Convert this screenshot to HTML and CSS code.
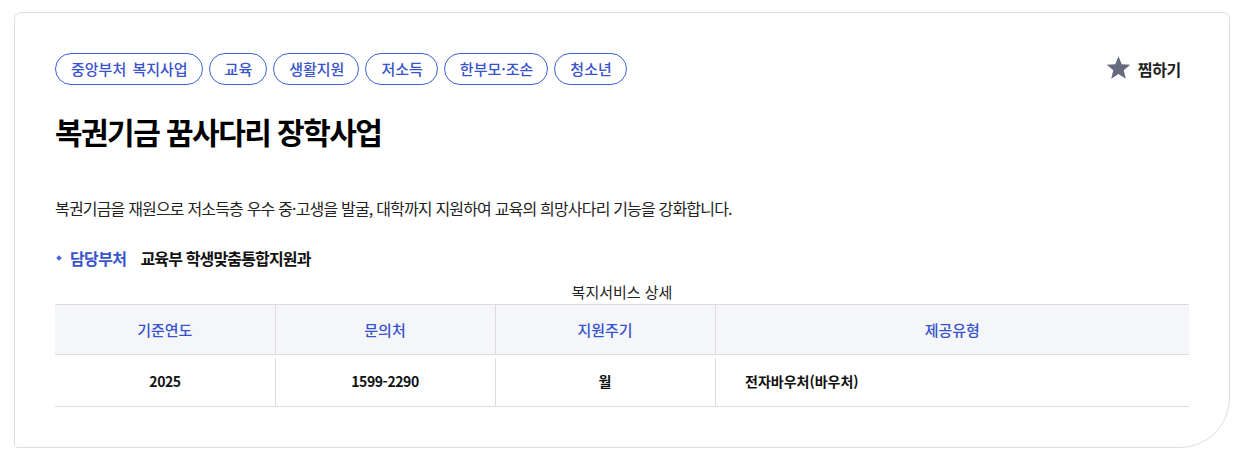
FILE: index.html
```html
<!DOCTYPE html>
<html lang="ko">
<head>
<meta charset="utf-8">
<title>복권기금 꿈사다리 장학사업</title>
<link rel="stylesheet" href="styles.css">
</head>
<body>
<article class="card">
  <div class="top">
    <ul class="tags">
      <li class="tag tag-wide">중앙부처 복지사업</li>
      <li class="tag">교육</li>
      <li class="tag">생활지원</li>
      <li class="tag">저소득</li>
      <li class="tag">한부모·조손</li>
      <li class="tag">청소년</li>
    </ul>
    <button class="fav" type="button">
      <svg class="star" width="25" height="25" viewBox="0 0 24 24" aria-hidden="true">
        <path d="M12 1.2l3.1 7.6 8.2.6-6.3 5.3 2 8-7-4.4-7 4.4 2-8L.7 9.4l8.2-.6z" fill="#676a7e"/>
      </svg>
      <span>찜하기</span>
    </button>
  </div>
  <h1 class="title">복권기금 꿈사다리 장학사업</h1>
  <p class="desc">복권기금을 재원으로 저소득층 우수 중·고생을 발굴, 대학까지 지원하여 교육의 희망사다리 기능을 강화합니다.</p>
  <dl class="dept">
    <dt>담당부처</dt>
    <dd>교육부 학생맞춤통합지원과</dd>
  </dl>
  <table class="detail">
    <caption>복지서비스 상세</caption>
    <colgroup>
      <col class="c1"><col class="c2"><col class="c3"><col class="c4">
    </colgroup>
    <thead>
      <tr><th>기준연도</th><th>문의처</th><th>지원주기</th><th>제공유형</th></tr>
    </thead>
    <tbody>
      <tr><td class="num">2025</td><td class="num">1599-2290</td><td>월</td><td class="left">전자바우처(바우처)</td></tr>
    </tbody>
  </table>
</article>
</body>
</html>
```
FILE: styles.css
```css
* { box-sizing: border-box; }
html, body { margin: 0; padding: 0; background: #fff; }
body {
  font-family: "Noto Sans CJK KR", "Noto Sans", sans-serif;
  color: #111;
}
.card {
  width: 1216px;
  height: 436px;
  margin: 12px 0 0 14px;
  padding: 40px 40px 40px 40px;
  border: 1px solid #dedede;
  border-radius: 7px 7px 50px 4px;
  background: #fff;
}
.top {
  display: flex;
  justify-content: space-between;
  align-items: center;
  height: 32px;
}
.tags {
  display: flex;
  gap: 6px;
  list-style: none;
  margin: 0;
  padding: 0;
}
.tag {
  height: 32px;
  padding: 0 14px 0 15px;
  border: 1px solid #3f5fd8;
  border-radius: 16px;
  color: #3853cc;
  font-size: 15px;
  font-weight: 500;
  line-height: 30px;
  white-space: nowrap;
}
.tag-wide { word-spacing: 2px; }
.fav {
  display: flex;
  align-items: center;
  gap: 7px;
  margin: 0 8px 0 0;
  padding: 0;
  border: 0;
  background: none;
  font-family: inherit;
  font-size: 16px;
  font-weight: 700;
  color: #222;
  letter-spacing: -0.3px;
  cursor: pointer;
}
.star { display: block; margin-top: -3px; }
.title {
  margin: 26px 0 0;
  font-size: 30px;
  line-height: 40px;
  font-weight: 700;
  letter-spacing: -1.55px;
  color: #000;
}
.desc {
  margin: 45px 0 0;
  font-size: 16px;
  line-height: 24px;
  letter-spacing: -0.82px;
  color: #222;
}
.dept {
  display: flex;
  align-items: center;
  margin: 26px 0 0;
  height: 24px;
  font-size: 16px;
  line-height: 24px;
  letter-spacing: -0.6px;
}
.dept dt {
  display: flex;
  align-items: center;
  gap: 9px;
  color: #3853cc;
  font-weight: 700;
}
.dept dt::before {
  content: "";
  width: 4px;
  height: 4px;
  margin-left: 2px;
  background: #4a66d8;
  transform: rotate(45deg);
}
.dept dd {
  margin: 0 0 0 14px;
  font-weight: 700;
  color: #111;
  letter-spacing: -0.85px;
}
.detail {
  width: 1134px;
  margin-top: 12px;
  border-collapse: collapse;
  table-layout: fixed;
  font-size: 14px;
}
.detail caption {
  height: 22px;
  font-size: 15px;
  line-height: 20px;
  color: #222;
}
.c1, .c2, .c3 { width: 220px; }
.detail th {
  height: 50px;
  padding: 0;
  background: #f5f6fa;
  border-top: 1px solid #dcdcdc;
  border-bottom: 1px solid #dcdcdc;
  border-left: 1px solid #dcdcdc;
  color: #3853cc;
  font-size: 15px;
  font-weight: 500;
}
.detail th:first-child { border-left: 0; }
.detail td {
  position: relative;
  height: 52px;
  padding: 0;
  text-align: center;
  border-bottom: 1px solid #dcdcdc;
  font-weight: 700;
  color: #111;
}
.detail td.num { letter-spacing: -0.4px; }
.detail td + td::before {
  content: "";
  position: absolute;
  left: 0;
  top: 3px;
  bottom: 0;
  width: 1px;
  background: #dcdcdc;
}
.detail td.left { text-align: left; padding-left: 30px; }
```
